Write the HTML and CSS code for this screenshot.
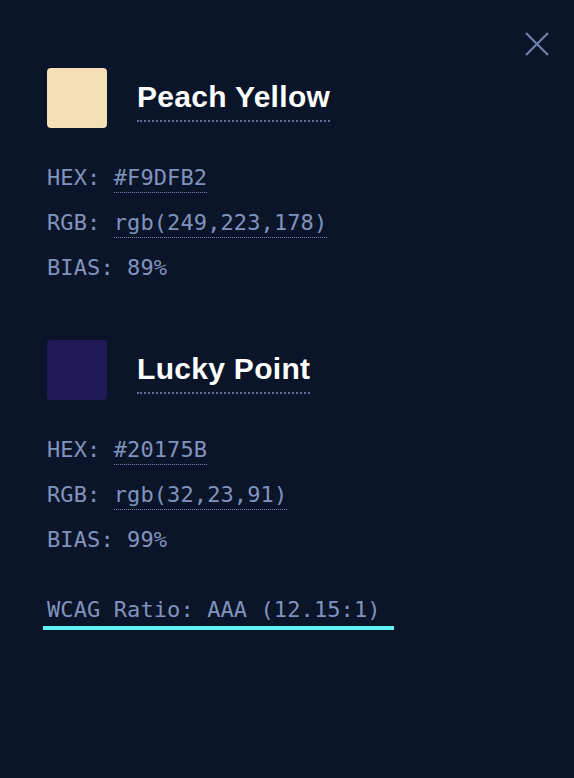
FILE: index.html
```html
<!DOCTYPE html>
<html>
<head>
<meta charset="utf-8">
<link rel="stylesheet" href="styles.css">
</head>
<body>
<div class="panel">
  <button class="close" aria-label="Close">
    <svg width="26" height="26" viewBox="0 0 26 26"><path d="M2 2 L24 24 M24 2 L2 24" stroke="#6f80a8" stroke-width="2.2" fill="none"/></svg>
  </button>
  <section class="color">
    <div class="head">
      <div class="swatch peach"></div>
      <h2 class="name">Peach Yellow</h2>
    </div>
    <div class="row">HEX: <span class="val">#F9DFB2</span></div>
    <div class="row">RGB: <span class="val">rgb(249,223,178)</span></div>
    <div class="row">BIAS: 89%</div>
  </section>
  <section class="color second">
    <div class="head">
      <div class="swatch lucky"></div>
      <h2 class="name">Lucky Point</h2>
    </div>
    <div class="row">HEX: <span class="val">#20175B</span></div>
    <div class="row">RGB: <span class="val">rgb(32,23,91)</span></div>
    <div class="row">BIAS: 99%</div>
  </section>
  <div class="wcag"><span class="ratio">WCAG Ratio: AAA (12.15:1)</span></div>
</div>
</body>
</html>
```
FILE: styles.css
```css
html, body {
  margin: 0;
  padding: 0;
  background: #0a1529;
  width: 574px;
  height: 778px;
  overflow: hidden;
}
.panel {
  position: relative;
  padding: 68px 0 0 47px;
}
.close {
  position: absolute;
  top: 31px;
  right: 24px;
  background: none;
  border: 0;
  padding: 0;
  width: 26px;
  height: 26px;
}
.head {
  display: flex;
  align-items: center;
  gap: 30px;
  height: 60px;
  margin-bottom: 27px;
}
.swatch {
  width: 60px;
  height: 60px;
  border-radius: 4px;
}
.peach { background: #f5dfb5; }
.lucky { background: #201a58; }
.name {
  margin: 0;
  font-family: "Liberation Sans", Arial, sans-serif;
  font-weight: bold;
  font-size: 30px;
  letter-spacing: 0.3px;
  line-height: 34px;
  color: #ffffff;
  padding-top: 5px;
  padding-bottom: 6px;
  border-bottom: 2px dotted #5f6f96;
}
.row {
  font-family: "DejaVu Sans Mono", monospace;
  font-size: 22px;
  letter-spacing: 0.1px;
  line-height: 45px;
  height: 45px;
  color: #8193bd;
}
.val {
  border-bottom: 1px dotted #7485b0;
  padding-bottom: 2px;
}
.second {
  margin-top: 50px;
}
.wcag {
  margin-top: 32px;
  margin-left: -4px;
}
.ratio {
  display: inline-block;
  font-family: "DejaVu Sans Mono", monospace;
  font-size: 22px;
  letter-spacing: 0.1px;
  line-height: 32px;
  color: #8193bd;
  padding: 0 13px 0 4px;
  border-bottom: 4px solid #5ef2f6;
}
```
